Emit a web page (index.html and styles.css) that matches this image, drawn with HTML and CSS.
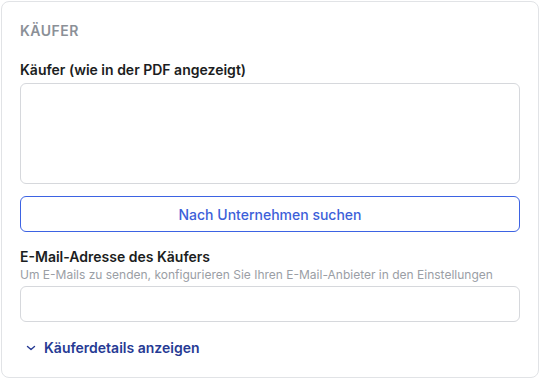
FILE: index.html
```html
<!DOCTYPE html>
<html lang="de">
<head>
    <meta charset="UTF-8">
    <meta name="viewport" content="width=device-width, initial-scale=1.0">
    <title>Käufer</title>
    <link rel="stylesheet" href="styles.css">
</head>
<body>
    <div class="card">
        <h2 class="section-title">KÄUFER</h2>

        <div class="field">
            <label class="label" for="buyer">Käufer (wie in der PDF angezeigt)</label>
            <textarea id="buyer" class="textarea"></textarea>
        </div>

        <button class="search-button">Nach Unternehmen suchen</button>

        <div class="field email-field">
            <label class="label" for="email">E-Mail-Adresse des Käufers</label>
            <div class="hint">Um E-Mails zu senden, konfigurieren Sie Ihren E-Mail-Anbieter in den Einstellungen</div>
            <input type="email" id="email" class="input">
        </div>

        <button class="toggle-link">
            <svg width="10" height="10" viewBox="0 0 10 10" fill="none">
                <path d="M1.5 3.5 L5 6.5 L8.5 3.5" stroke="currentColor" stroke-width="1.4" stroke-linecap="round" stroke-linejoin="round"/>
            </svg>
            Käuferdetails anzeigen
        </button>
    </div>
</body>
</html>
```

FILE: styles.css
```css
* {
    box-sizing: border-box;
}

body {
    margin: 0;
    padding: 1px;
    font-family: Inter, "Noto Sans", sans-serif;
    background: #fff;
}

.card {
    width: 538px;
    height: 377px;
    border: 1px solid #e1e3e6;
    border-radius: 8px;
    padding: 18px 18px 0 18px;
    display: flex;
    flex-direction: column;
}

.section-title {
    margin: 3px 0 0 0;
    font-size: 14px;
    font-weight: 600;
    letter-spacing: 0.5px;
    color: #8b9097;
    line-height: 16px;
}

.field {
    display: flex;
    flex-direction: column;
}

.label {
    margin-top: 22px;
    font-size: 14px;
    font-weight: 600;
    color: #1b1d21;
    line-height: 18px;
}

.textarea {
    margin-top: 4px;
    height: 101px;
    border: 1px solid #d6d8dc;
    border-radius: 6px;
    resize: none;
    font-family: inherit;
}

.search-button {
    margin-top: 12px;
    height: 36px;
    border: 1px solid #3d63e3;
    border-radius: 6px;
    background: #fff;
    color: #3d5fd9;
    font-family: inherit;
    font-size: 14px;
    font-weight: 500;
    cursor: pointer;
}

.email-field .label {
    margin-top: 16px;
}

.hint {
    margin-top: 1px;
    font-size: 12px;
    color: #9a9ea5;
    line-height: 16px;
}

.input {
    margin-top: 3px;
    height: 36px;
    border: 1px solid #d6d8dc;
    border-radius: 6px;
    font-family: inherit;
}

.toggle-link {
    margin-top: 16px;
    align-self: flex-start;
    display: flex;
    align-items: center;
    gap: 8px;
    padding: 0 0 0 6px;
    border: none;
    background: none;
    color: #263a94;
    font-family: inherit;
    font-size: 14px;
    font-weight: 600;
    line-height: 20px;
    cursor: pointer;
}
```
